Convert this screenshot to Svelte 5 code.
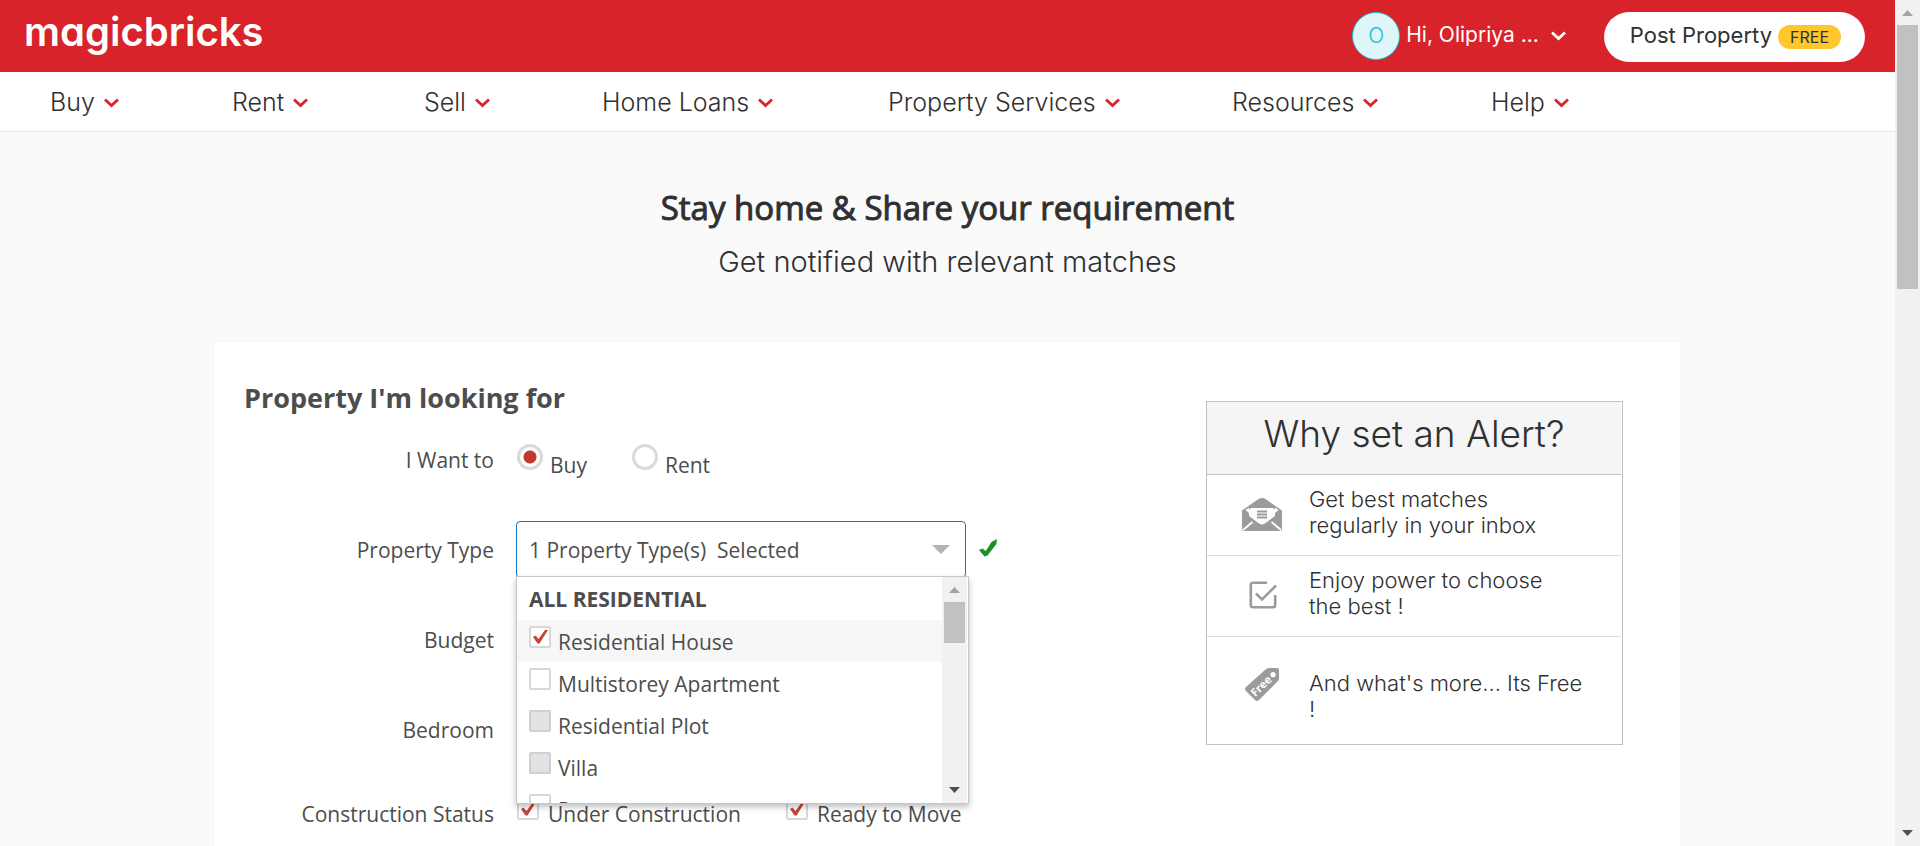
<script>
  const nav = ['Buy', 'Rent', 'Sell', 'Home Loans', 'Property Services', 'Resources', 'Help'];
  let intent = $state('buy');
  let open = $state(true);
  let types = $state([
    { name: 'Residential House', checked: true, disabled: false },
    { name: 'Multistorey Apartment', checked: false, disabled: false },
    { name: 'Residential Plot', checked: false, disabled: true },
    { name: 'Villa', checked: false, disabled: true },
    { name: 'P', checked: false, disabled: false }
  ]);
  let statuses = $state([
    { name: 'Under Construction', checked: true },
    { name: 'Ready to Move', checked: true }
  ]);
  const count = $derived(types.filter((t) => t.checked).length);
</script>

{#snippet chevron()}
  <svg class="chevron" width="15" height="10" viewBox="0 0 15 10" fill="none" stroke="currentColor" stroke-width="2.8" aria-hidden="true">
    <path d="M1 1.500 7.500 7.500 14 1.500" />
  </svg>
{/snippet}

<div class="window">
  <div class="page">
    <header class="top">
      <a class="logo" href="#home">magicbricks</a>
      <div class="account">
        <button class="user" type="button">
          <span class="avatar">O</span>
          <span class="hello">Hi, Olipriya ...</span>
          {@render chevron()}
        </button>
        <a class="post" href="#post"><span>Post Property</span> <span class="free">FREE</span></a>
      </div>
    </header>

    <nav class="menu" aria-label="Main">
      {#each nav as item}
        <a href="#{item}">{item}{@render chevron()}</a>
      {/each}
    </nav>

    <main>
      <h1>Stay home &amp; Share your requirement</h1>
      <p class="sub">Get notified with relevant matches</p>

      <section class="card">
        <form class="form">
          <h2>Property I'm looking for</h2>

          <div class="row">
            <span class="label">I Want to</span>
            <div class="choices radios">
              <label class="choice"><input type="radio" value="buy" bind:group={intent} />Buy</label>
              <label class="choice"><input type="radio" value="rent" bind:group={intent} />Rent</label>
            </div>
          </div>

          <div class="row">
            <label class="label" for="ptype">Property Type</label>
            <div class="picker">
              <button id="ptype" class="field" type="button" aria-expanded={open} onclick={() => (open = !open)}>
                <span>{count} Property Type(s)&nbsp; Selected</span>
                <svg width="18" height="9" viewBox="0 0 18 9" aria-hidden="true"><path d="M0 0h18L9 9z" fill="#b3b3b3" /></svg>
              </button>
              {#if open}
                <div class="dropdown">
                  <div class="list">
                    <div class="group">ALL RESIDENTIAL</div>
                    {#each types as t, i}
                      <label class="option" class:active={i === 0}>
                        <input type="checkbox" bind:checked={t.checked} disabled={t.disabled} />{t.name}
                      </label>
                    {/each}
                  </div>
                  <div class="bar small" aria-hidden="true">
                    <svg width="11" height="6" viewBox="0 0 11 6"><path d="M0 6 5.500 0 11 6z" fill="#a3a3a3" /></svg>
                    <span class="thumb"></span>
                    <svg width="11" height="6" viewBox="0 0 11 6"><path d="M0 0h11L5.500 6z" fill="#505050" /></svg>
                  </div>
                </div>
              {/if}
            </div>
            <svg class="valid" width="18" height="18" viewBox="0 0 18 18" aria-hidden="true">
              <path d="M0 11 3.500 9.500 6.800 12 12.500 3 17.800 0 17.500 5 8.500 16.500 5.500 17.500z" fill="#1e9121" />
            </svg>
          </div>

          <div class="row"><span class="label">Budget</span></div>
          <div class="row"><span class="label">Bedroom</span></div>

          <div class="row status">
            <span class="label">Construction Status</span>
            <div class="choices">
              {#each statuses as s}
                <label class="choice"><input type="checkbox" bind:checked={s.checked} />{s.name}</label>
              {/each}
            </div>
          </div>
        </form>

        <aside class="alert">
          <h3>Why set an Alert?</h3>
          <ul>
            <li>
              <svg width="40" height="34" viewBox="0 0 40 34" aria-hidden="true">
                <path d="M0 12.500 16.500 1q3.500-2 7 0L40 12.500V31q0 2-2 2H2q-2 0-2-2z" fill="#9b9b9b" />
                <path d="M7 13q0-3 3-3h20q3 0 3 3v5l-10 7.500q-3 2-6 0L7 18z" fill="#fff" />
                <path d="M3.500 12 7 9.500V15zM36.500 12 33 9.500V15z" fill="#fff" />
                <path d="M15 13.500h10M15 16.500h10M15 19.500h10" stroke="#9b9b9b" stroke-width="1.800" />
                <path d="M1 32 10.500 24M39 32 29.500 24" stroke="#fff" stroke-width="1.800" />
              </svg>
              <span>Get best matches<br />regularly in your inbox</span>
            </li>
            <li>
              <svg width="28" height="28" viewBox="0 0 28 28" fill="none" stroke="#9b9b9b" stroke-width="2.600" aria-hidden="true">
                <path d="M18 1.800H4Q1.800 1.800 1.800 4v20q0 2.200 2.200 2.200h20q2.200 0 2.200-2.200V14" />
                <path d="M7 12.500 13 18.500 27 4.500" />
              </svg>
              <span>Enjoy power to choose<br />the best !</span>
            </li>
            <li class="last">
              <svg width="34" height="34" viewBox="0 0 34 34" aria-hidden="true">
                <path d="M20.500 1.500Q22 0 24 0h8q2 0 2 2v8q0 2-1.500 3.500L14 32q-2 2-4 0L1 23q-2-2 0-4zM28 4a2.600 2.600 0 1 0 .1 5.200A2.600 2.600 0 0 0 28 4z" fill="#9b9b9b" fill-rule="evenodd" />
                <text x="0" y="4" transform="translate(16 18) rotate(-44)" text-anchor="middle" fill="#fff" font-family="Open Sans, sans-serif" font-size="11" font-weight="700">Free</text>
              </svg>
              <span>And what's more... Its Free<br />!</span>
            </li>
          </ul>
        </aside>
      </section>
    </main>
  </div>

  <div class="bar" aria-hidden="true">
    <svg width="11" height="6" viewBox="0 0 11 6"><path d="M0 6 5.500 0 11 6z" fill="#a3a3a3" /></svg>
    <span class="thumb"></span>
    <svg width="11" height="6" viewBox="0 0 11 6"><path d="M0 0h11L5.500 6z" fill="#505050" /></svg>
  </div>
</div>

<style>
  :global(body) { overflow: hidden; }
  .window, .window * { box-sizing: border-box; }
  .window {
    display: flex;
    height: 100vh;
    overflow: hidden;
    background: #fafafa;
    color: #4d4d4d;
    font: 21px/28px "Open Sans", sans-serif;
  }
  .page { flex: 1; min-width: 0; overflow: hidden; }
  a { color: inherit; text-decoration: none; }
  button { font: inherit; color: inherit; cursor: pointer; }
  h1, h2, h3, p, ul { margin: 0; padding: 0; }
  .chevron { flex: none; }

  .top {
    display: flex;
    justify-content: space-between;
    align-items: center;
    height: 72px;
    padding: 0 30px 0 24px;
    background: #d8232a;
    color: #fff;
    font-family: Inter, sans-serif;
  }
  .logo { padding-bottom: 8px; font-size: 40px; font-weight: 600; line-height: 48px; font-feature-settings: "cv11"; }
  .account { display: flex; align-items: center; gap: 38px; }
  .user { display: flex; align-items: center; padding: 0; border: 0; background: none; }
  .avatar {
    width: 48px;
    height: 48px;
    border: 1px solid #1fbdd2;
    border-radius: 50%;
    background: #dff6f8;
    color: #1fbdd2;
    font-weight: 300;
    line-height: 46px;
  }
  .hello { margin: 0 12px 2px 6px; font-weight: 400; }
  .post {
    display: flex;
    align-items: center;
    gap: 6px;
    height: 50px;
    margin-top: 2px;
    padding: 0 24px;
    border-radius: 25px;
    background: #fff;
    color: #303030;
    font-size: 22px;
  }
  .post > span:first-child { padding: 0 0 4px 2px; }
  .free {
    padding: 0 12px;
    border-radius: 12px;
    background: #ffc72c;
    font-size: 16px;
    line-height: 24px;
  }

  .menu {
    display: grid;
    grid-template-columns: 182fr 192fr 178fr 286fr 344fr 259fr 404fr;
    height: 60px;
    padding-left: 50px;
    border-bottom: 1px solid #e6e6e6;
    background: #fff;
    color: #303030;
    font: 300 25px/60px Inter, sans-serif;
  }
  .menu a { display: flex; align-items: center; gap: 9px; white-space: nowrap; }
  .menu .chevron { margin-top: 2px; color: #d8232a; }

  main { padding: 55px 213px 0; }
  h1 { color: #303030; font-size: 33px; font-weight: 400; line-height: 42px; text-align: center; -webkit-text-stroke: 1px #303030; }
  .sub { margin-top: 15px; color: #303030; font: 300 29px/36px Inter, sans-serif; text-align: center; }

  .card {
    display: flex;
    justify-content: space-between;
    align-items: flex-start;
    min-height: 1200px;
    margin-top: 61px;
    padding: 38px 58px 0 30px;
    border: 1px solid #f5f5f5;
    background: #fff;
  }
  h2 { margin-bottom: 15px; font-size: 27px; font-weight: 700; line-height: 36px; }
  .row { display: flex; min-height: 58px; margin-bottom: 32px; line-height: 58px; }
  .row.status { margin-top: -6px; }
  .label { width: 250px; margin-right: 22px; text-align: right; white-space: nowrap; }
  .choices { display: flex; gap: 45px; padding-left: 1px; }
  .choice { display: flex; align-items: center; gap: 9px; white-space: nowrap; }
  .radios .choice { height: 68px; margin-bottom: -10px; gap: 7px; }

  input { flex: none; appearance: none; margin: 0 0 10px; background: #fff; }
  input[type="radio"] {
    width: 26px;
    height: 26px;
    margin-bottom: 16px;
    border: 3px solid #dadada;
    border-radius: 50%;
  }
  input[type="radio"]:checked { background: radial-gradient(circle, #c1392b 6px, #fff 7px); }
  input[type="checkbox"] { width: 22px; height: 22px; border: 2px solid #d8d8d8; border-radius: 2px; }
  input[type="checkbox"]:disabled { background: #e2e2e2; border-color: #d0d0d0; }
  input[type="checkbox"]:checked {
    background: #fff url("data:image/svg+xml,%3Csvg xmlns='http://www.w3.org/2000/svg' viewBox='0 0 18 18'%3E%3Cpath d='M2 9 4.500 7.500 7.500 11 14 2 17 2 8.500 15.500 6.500 15.500z' fill='%23c64437'/%3E%3C/svg%3E") center / 18px 18px;
  }

  .picker { position: relative; width: 450px; }
  .field {
    display: flex;
    justify-content: space-between;
    align-items: center;
    width: 100%;
    height: 57px;
    padding: 0 15px 0 12px;
    border: 1px solid #1575c5;
    border-radius: 4px;
    background: #fff;
  }
  .dropdown {
    position: absolute;
    z-index: 2;
    top: 55px;
    left: 0;
    display: flex;
    width: 453px;
    height: 228px;
    padding-right: 1px;
    border: 1px solid #c8c8c8;
    background: #fff;
    box-shadow: 0 3px 6px rgba(0, 0, 0, 0.25);
    line-height: 42px;
  }
  .list { flex: 1; overflow: hidden; }
  .group { height: 43px; padding: 1px 12px 0; font-weight: 700; }
  .option { display: flex; align-items: center; gap: 7px; height: 42px; padding: 2px 12px 0; line-height: 40px; }
  .option.active { background: #f7f7f7; }
  .valid { margin: 18px 0 0 13px; }

  .alert { width: 417px; margin-top: 21px; padding-right: 1px; border: 1px solid #c0c0c0; color: #303030; font-family: Inter, sans-serif; font-weight: 300; }
  h3 {
    height: 73px;
    border-bottom: 1px solid #c0c0c0;
    background: #f5f5f5;
    font-size: 37px;
    font-weight: 300;
    line-height: 64px;
    text-align: center;
  }
  ul { list-style: none; }
  li {
    display: grid;
    grid-template-columns: 78px 1fr;
    column-gap: 24px;
    align-items: center;
    height: 81px;
    padding-bottom: 6px;
    border-bottom: 1px solid #dedede;
    font-size: 22px;
    line-height: 26px;
    white-space: nowrap;
  }
  li svg { justify-self: end; margin: 6px 3px 0 0; }
  li:nth-child(2) svg { margin: 4px 8px 0 0; }
  .last { height: 107px; padding: 10px 0 0; border: 0; }
  .last svg { margin: 0 6px 22px 0; }

  .bar {
    display: flex;
    flex-direction: column;
    align-items: center;
    flex: none;
    width: 25px;
    padding: 10px 0;
    background: #f1f1f1;
  }
  .bar .thumb { width: 21px; height: 264px; margin: 9px 0 auto; background: #c1c1c1; }
  .bar.small .thumb { height: 41px; }
</style>
